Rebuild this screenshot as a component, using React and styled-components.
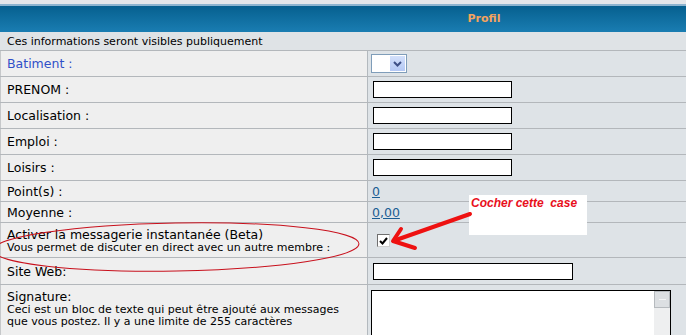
import React from "react";
import styled, { createGlobalStyle } from "styled-components";

const Global = createGlobalStyle`
  body { margin: 0; background: #e4e7ea; font-family: "DejaVu Sans", Verdana, sans-serif; }
`;

const Page = styled.div`
  position: relative;
  width: 686px;
  height: 335px;
  overflow: hidden;
  padding-top: 4px;
  box-sizing: border-box;
`;

const Header = styled.div`
  height: 26px;
  border-top: 2px solid #8db5d0;
  background: linear-gradient(#06608f, #1a7db2);
  color: #f4a35e;
  font-weight: bold;
  font-size: 11px;
  line-height: 26px;
  text-align: center;
  padding-left: 282px;
`;

const Notice = styled.div`
  height: 19px;
  box-sizing: border-box;
  line-height: 19px;
  padding-left: 7px;
  font-size: 11px;
  color: #000;
  background: #dfe3e6;
  border-bottom: 1px solid #b3b7bb;
`;

const Row = styled.div`
  display: grid;
  grid-template-columns: 368px 1fr;
  height: ${(p) => p.$h}px;
  box-sizing: border-box;
  border-bottom: 1px solid #b3b7bb;
`;

const Label = styled.div`
  background: #efefef;
  border-left: 1px solid #c6c8ca;
  border-right: 1px solid #b3b9be;
  padding-left: 6px;
  display: flex;
  flex-direction: column;
  justify-content: ${(p) => (p.$top ? "flex-start" : "center")};
  padding-top: ${(p) => (p.$top ? 4 : 0)}px;
  font-size: 12.5px;
  line-height: 15px;
  color: ${(p) => (p.$blue ? "#3050c8" : "#000")};
`;

const Small = styled.span`
  font-size: 11px;
  line-height: 12px;
  color: #000;
`;

const Field = styled.div`
  background: #dee3e7;
  display: flex;
  align-items: ${(p) => (p.$top ? "flex-start" : "center")};
  padding-left: ${(p) => p.$pl ?? 5}px;
  padding-top: ${(p) => (p.$top ? 5 : 0)}px;
`;

const TextInput = styled.div`
  width: ${(p) => p.$w}px;
  height: 15px;
  border: 1px solid #000;
  background: #fff;
`;

const Select = styled.div`
  width: 34px;
  height: 17px;
  border: 1px solid #7f9db9;
  background: #fff;
  display: flex;
  justify-content: flex-end;
  margin-left: -1px;
`;

const SelectBtn = styled.div`
  width: 15px;
  margin: 1px;
  background: linear-gradient(#d3e0fb, #b4c8f4);
  display: flex;
  align-items: center;
  justify-content: center;
`;

const Link = styled.a`
  font-size: 12.5px;
  color: #1a5d93;
  text-decoration: underline;
`;

const Check = styled.div`
  width: 11px;
  height: 11px;
  border: 1px solid #6f6f6f;
  border-right-color: #d0d0d0;
  border-bottom-color: #d0d0d0;
  background: #fff;
  margin-left: 5px;
  margin-top: 6px;
  display: flex;
  align-items: center;
  justify-content: center;
`;

const Area = styled.div`
  width: 298px;
  height: 60px;
  border: 1px solid #000;
  background: #fff;
  display: flex;
  justify-content: flex-end;
  margin-left: -1px;
`;

const Scroll = styled.div`
  width: 16px;
  background: #eeeff0;
`;

const ScrollBtn = styled.div`
  height: 15px;
  border: 1px solid #b6babe;
  background: #dcdfe2;
  display: flex;
  align-items: center;
  justify-content: center;
  &::after {
    content: "";
    width: 7px;
    height: 1px;
    background: #f4f5f6;
  }
`;

const Note = styled.div`
  position: absolute;
  left: 469px;
  top: 195px;
  width: 118px;
  height: 40px;
  background: #fff;
  color: #e8101c;
  font-family: "Liberation Sans", Arial, sans-serif;
  font-weight: bold;
  font-style: italic;
  font-size: 12px;
  line-height: 16px;
  padding-left: 2px;
  box-sizing: border-box;
`;

const Overlay = styled.svg`
  position: absolute;
  left: 0;
  top: 0;
  pointer-events: none;
`;

export default function App() {
  return (
    <Page>
      <Global />
      <Header>Profil</Header>
      <Notice>Ces informations seront visibles publiquement</Notice>
      <Row $h={26}>
        <Label $blue>Batiment :</Label>
        <Field $pl={4}>
          <Select>
            <SelectBtn>
              <svg width="9" height="6" viewBox="0 0 9 6">
                <path d="M1 1 L4.5 4.5 L8 1" fill="none" stroke="#3d4f86" strokeWidth="2" />
              </svg>
            </SelectBtn>
          </Select>
        </Field>
      </Row>
      {["PRENOM :", "Localisation :", "Emploi :", "Loisirs :"].map((t) => (
        <Row $h={26} key={t}>
          <Label>{t}</Label>
          <Field>
            <TextInput $w={137} />
          </Field>
        </Row>
      ))}
      <Row $h={21}>
        <Label>Point(s) :</Label>
        <Field $pl={4}>
          <Link>0</Link>
        </Field>
      </Row>
      <Row $h={21}>
        <Label>Moyenne :</Label>
        <Field $pl={4}>
          <Link>0,00</Link>
        </Field>
      </Row>
      <Row $h={35}>
        <Label>
          Activer la messagerie instantanée (Beta)
          <Small>Vous permet de discuter en direct avec un autre membre :</Small>
        </Label>
        <Field $top $pl={4}>
          <Check>
            <svg width="9" height="8" viewBox="0 0 9 8">
              <path d="M1 4 L3.5 6.5 L8 1" fill="none" stroke="#000" strokeWidth="2" />
            </svg>
          </Check>
        </Field>
      </Row>
      <Row $h={27}>
        <Label>Site Web:</Label>
        <Field>
          <TextInput $w={198} />
        </Field>
      </Row>
      <Row $h={70}>
        <Label $top>
          Signature:
          <Small>
            Ceci est un bloc de texte qui peut être ajouté aux messages
            <br />
            que vous postez. Il y a une limite de 255 caractères
          </Small>
        </Label>
        <Field $top $pl={4}>
          <Area>
            <Scroll>
              <ScrollBtn />
            </Scroll>
          </Area>
        </Field>
      </Row>
      <Note>Cocher cette&nbsp; case</Note>
      <Overlay width="686" height="335">
        <ellipse cx="176" cy="247" rx="183" ry="24" fill="none" stroke="#c8101c" strokeWidth="1" transform="rotate(-1 176 247)" />
        <path d="M470 214 L396 240" stroke="#ee1111" strokeWidth="4" strokeLinecap="round" />
        <path d="M401 229 L393 241 L415 248" fill="none" stroke="#ee1111" strokeWidth="4" strokeLinecap="round" strokeLinejoin="round" />
      </Overlay>
    </Page>
  );
}
